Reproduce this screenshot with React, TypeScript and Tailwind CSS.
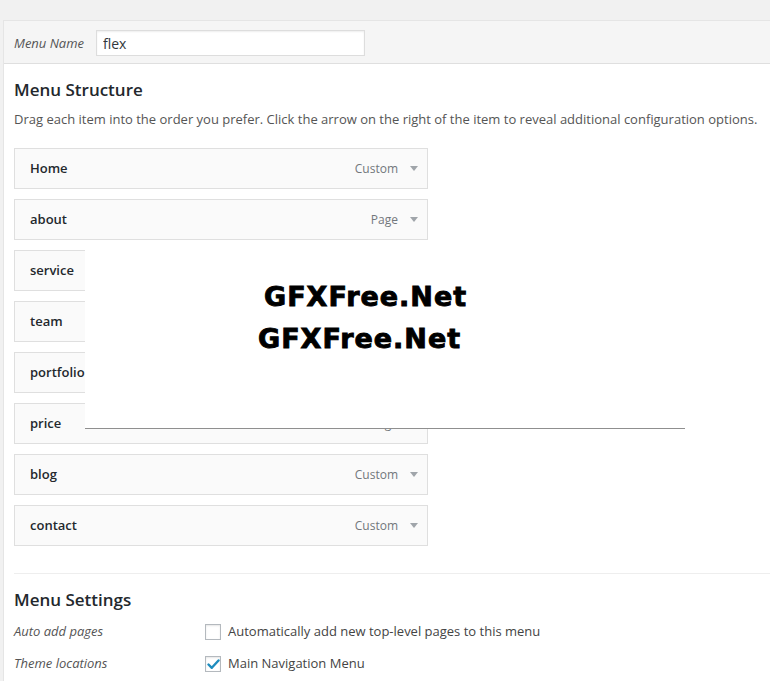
import React from 'react';

const items = [
    { title: 'Home', type: 'Custom' },
    { title: 'about', type: 'Page' },
    { title: 'service', type: 'Custom' },
    { title: 'team', type: 'Custom' },
    { title: 'portfolio', type: 'Custom' },
    { title: 'price', type: 'Page' },
    { title: 'blog', type: 'Custom' },
    { title: 'contact', type: 'Custom' },
];

function Arrow() {
    return (
        <svg width="8" height="5" viewBox="0 0 8 5" className="block">
            <path d="M0 0 H8 L4 5 Z" fill="#a0a5aa" />
        </svg>
    );
}

function MenuItem({ title, type }: { title: string; type: string }) {
    return (
        <li className="flex h-[41px] w-[414px] items-center justify-between border border-[#dfdfdf] bg-[#fafafa] pl-[15px] pr-[9px]">
            <span className="text-[13px] font-semibold text-[#23282d]">{title}</span>
            <span className="flex items-center gap-[12px]">
                <span className="text-[12px] text-[#72777c]">{type}</span>
                <Arrow />
            </span>
        </li>
    );
}

function Checkbox({ checked }: { checked?: boolean }) {
    return (
        <span className="flex h-4 w-4 items-center justify-center border border-[#b4b9be] bg-white shadow-[inset_0_1px_2px_rgba(0,0,0,0.1)]">
            {checked && (
                <svg width="13" height="11" viewBox="0 0 13 11">
                    <path d="M1.5 5.5 L4.8 8.8 L11.5 1.5" fill="none" stroke="#1e8cbe" strokeWidth="2.4" strokeLinecap="round" strokeLinejoin="round" />
                </svg>
            )}
        </span>
    );
}

export default function App() {
    return (
        <div className="min-h-[681px] overflow-hidden bg-[#f1f1f1] pl-[3px] pt-5 font-['Open_Sans','Liberation_Sans',sans-serif]">
            <div className="relative min-h-[661px] border-l border-t border-[#e5e5e5] bg-white">
                {/* header */}
                <div className="flex h-[43px] items-start border-b border-[#dfdfdf] bg-[#f5f5f5] pl-[10px] pt-[9px]">
                    <span className="w-[82px] pt-[4px] text-[13px] italic text-[#555]">Menu Name</span>
                    <input readOnly value="flex" className="h-[26px] w-[269px] border border-[#ddd] bg-white px-[6px] text-[14px] text-[#32373c] shadow-[inset_0_1px_2px_rgba(0,0,0,0.07)] outline-none" />
                </div>

                {/* structure */}
                <div className="pl-[10px]">
                    <h3 className="mt-[15px] text-[17px] leading-[22px] font-semibold text-[#23282d]">Menu Structure</h3>
                    <p className="mt-[8px] whitespace-nowrap text-[13px] leading-[20px] text-[#555]">
                        Drag each item into the order you prefer. Click the arrow on the right of the item to reveal additional configuration options.
                    </p>
                    <ul className="mt-[19px] flex flex-col gap-[10px]">
                        {items.map(i => <MenuItem key={i.title} title={i.title} type={i.type} />)}
                    </ul>

                    <div className="mt-[27px] border-t border-[#eee]" />

                    <h3 className="mt-[15px] text-[17px] leading-[22px] font-semibold text-[#23282d]">Menu Settings</h3>
                    <div className="mt-[5px] flex h-[32px] items-center">
                        <span className="w-[191px] text-[13px] italic text-[#555]">Auto add pages</span>
                        <Checkbox />
                        <span className="ml-[7px] text-[13px] text-[#444]">Automatically add new top-level pages to this menu</span>
                    </div>
                    <div className="flex h-[32px] items-center">
                        <span className="w-[191px] text-[13px] italic text-[#555]">Theme locations</span>
                        <Checkbox checked />
                        <span className="ml-[7px] text-[13px] text-[#444]">Main Navigation Menu</span>
                    </div>
                </div>

                {/* watermark box */}
                <div className="absolute left-[81px] top-[223px] h-[185px] w-[600px] border-b border-[#8f8f8f] bg-white pt-[37px] font-['DejaVu_Sans',sans-serif] text-[27px] leading-[32px] font-bold tracking-[1px] text-black [-webkit-text-stroke:0.9px_black]">
                    <div className="ml-[179px]">GFXFree.Net</div>
                    <div className="ml-[173px] mt-[10px]">GFXFree.Net</div>
                </div>
            </div>
        </div>
    );
}
